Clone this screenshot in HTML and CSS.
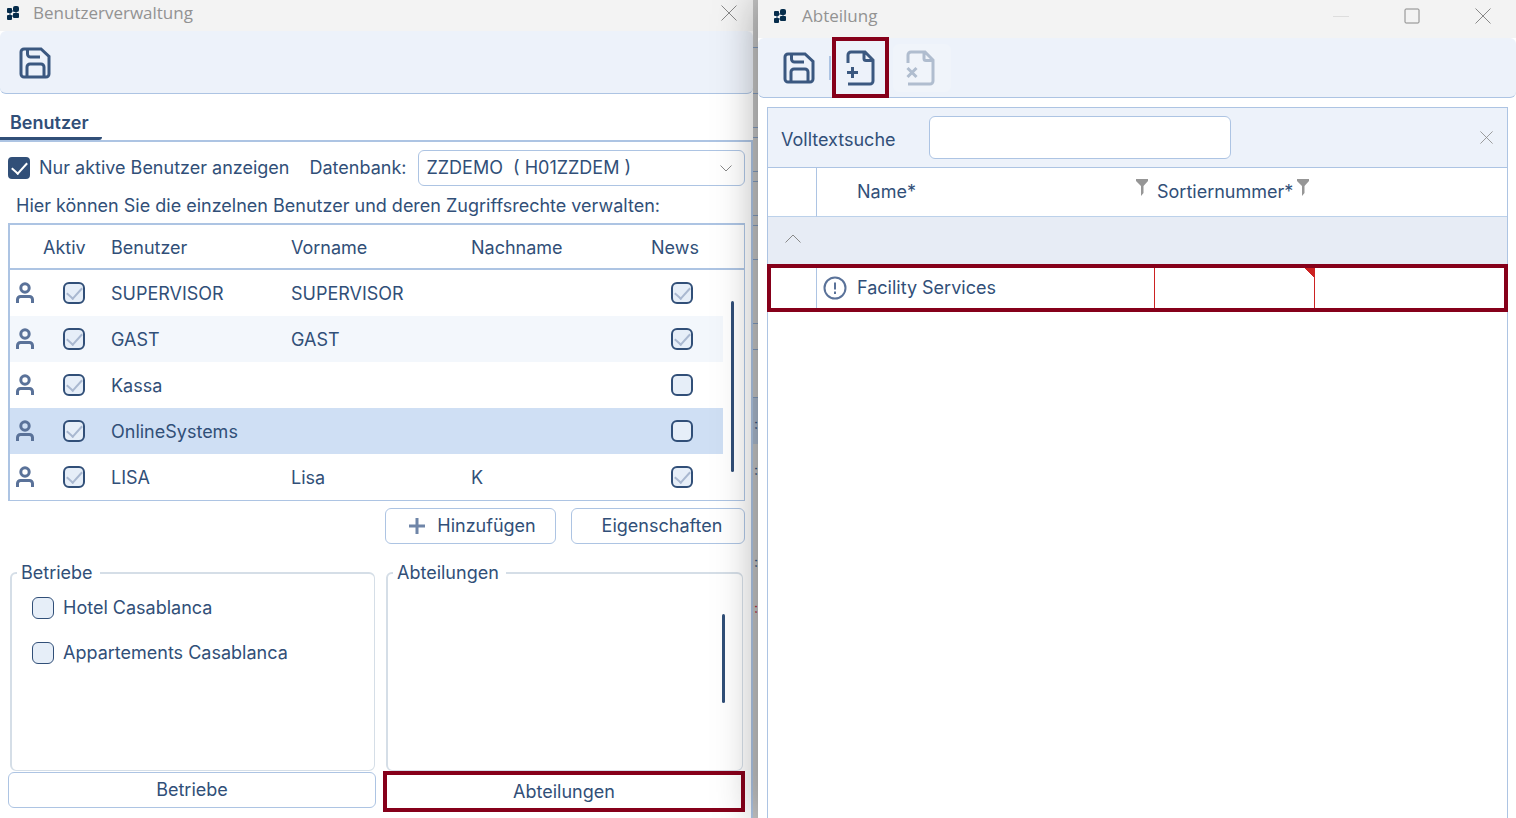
FILE: index.html
```html
<!DOCTYPE html>
<html lang="de">
<head>
    <meta charset="UTF-8">
    <meta name="viewport" content="width=device-width, initial-scale=1.0">
    <title>Benutzerverwaltung</title>
    <link rel="stylesheet" href="styles.css">
</head>
<body>
    <!-- shared icons -->
    <svg class="sprite" aria-hidden="true">
        <symbol id="logo" viewBox="0 0 14 16">
            <path d="M3 5h7v2H3zM3 10h7v2H3zM3 5h2v8H3zM9 3h2v8H9z" fill="#7d93a8"/>
            <rect x="1" y="3" width="5" height="5" rx="1" fill="#052c4b"/>
            <rect x="1" y="10" width="5" height="5" rx="1" fill="#052c4b"/>
            <rect x="7" y="1" width="6" height="6" rx="2" fill="#052c4b"/>
            <rect x="7" y="8" width="6" height="5" rx="1" fill="#052c4b"/>
        </symbol>
        <symbol id="save" viewBox="0 0 32 32">
            <path d="M5 2h17l8 7.500V27a3 3 0 0 1-3 3H5a3 3 0 0 1-3-3V5a3 3 0 0 1 3-3zM8.500 2.500V7a3 3 0 0 0 3 3H21M8 29.500V20a3 3 0 0 1 3-3h11a3 3 0 0 1 3 3v9.500"/>
        </symbol>
        <symbol id="page" viewBox="0 0 32 36">
            <path d="M5 13V5a3 3 0 0 1 3-3h14l8 8v21a3 3 0 0 1-3 3H5M21 2.500v6a2 2 0 0 0 2 2h6.500"/>
        </symbol>
        <symbol id="user" viewBox="0 0 18 22">
            <circle cx="9" cy="6" r="4.200"/>
            <path d="M1.500 21v-3.500a3 3 0 0 1 3-3h9a3 3 0 0 1 3 3V21"/>
        </symbol>
        <symbol id="close" viewBox="0 0 16 16">
            <path d="M.5.5l15 15M15.500.5l-15 15"/>
        </symbol>
        <symbol id="filter" viewBox="0 0 12 17">
            <path d="M0 0h12v2L7.500 7v7L5 17V7L0 2z"/>
        </symbol>
    </svg>

    <main class="window users">
        <header class="titlebar">
            <svg class="logo"><use href="#logo"/></svg>
            <h1>Benutzerverwaltung</h1>
            <button type="button" class="win-btn" aria-label="Schließen"><svg class="x"><use href="#close"/></svg></button>
        </header>
        <div class="toolbar">
            <button type="button" class="tool" aria-label="Speichern"><svg class="save"><use href="#save"/></svg></button>
        </div>
        <nav class="tabs">
            <a href="#benutzer" class="tab">Benutzer</a>
        </nav>

        <section class="content" id="benutzer">
            <div class="options">
                <label class="check-label"><input type="checkbox" class="solid" checked> Nur aktive Benutzer anzeigen</label>
                <label for="datenbank">Datenbank:</label>
                <div class="select">
                    <select id="datenbank">
                        <option>ZZDEMO&nbsp; ( H01ZZDEM )</option>
                    </select>
                    <svg class="chevron" viewBox="0 0 12 7"><path d="M.5.5L6 6l5.500-5.500"/></svg>
                </div>
            </div>
            <p class="hint">Hier können Sie die einzelnen Benutzer und deren Zugriffsrechte verwalten:</p>

            <div class="user-list">
                <table>
                    <colgroup>
                        <col class="c-icon"><col class="c-active"><col><col><col><col class="c-news"><col class="c-scroll">
                    </colgroup>
                    <thead>
                        <tr><th></th><th class="active">Aktiv</th><th>Benutzer</th><th>Vorname</th><th>Nachname</th><th>News</th><th></th></tr>
                    </thead>
                    <tbody>
                        <tr>
                            <td class="icon"><svg class="user"><use href="#user"/></svg></td>
                            <td class="active"><input type="checkbox" aria-label="SUPERVISOR aktiv" checked disabled></td>
                            <td>SUPERVISOR</td><td>SUPERVISOR</td><td></td>
                            <td class="news"><input type="checkbox" aria-label="SUPERVISOR News" checked disabled></td><td></td>
                        </tr>
                        <tr class="even">
                            <td class="icon"><svg class="user"><use href="#user"/></svg></td>
                            <td class="active"><input type="checkbox" aria-label="GAST aktiv" checked disabled></td>
                            <td>GAST</td><td>GAST</td><td></td>
                            <td class="news"><input type="checkbox" aria-label="GAST News" checked disabled></td><td></td>
                        </tr>
                        <tr>
                            <td class="icon"><svg class="user"><use href="#user"/></svg></td>
                            <td class="active"><input type="checkbox" aria-label="Kassa aktiv" checked disabled></td>
                            <td>Kassa</td><td></td><td></td>
                            <td class="news"><input type="checkbox" aria-label="Kassa News" disabled></td><td></td>
                        </tr>
                        <tr class="selected">
                            <td class="icon"><svg class="user"><use href="#user"/></svg></td>
                            <td class="active"><input type="checkbox" aria-label="OnlineSystems aktiv" checked disabled></td>
                            <td>OnlineSystems</td><td></td><td></td>
                            <td class="news"><input type="checkbox" aria-label="OnlineSystems News" disabled></td><td></td>
                        </tr>
                        <tr>
                            <td class="icon"><svg class="user"><use href="#user"/></svg></td>
                            <td class="active"><input type="checkbox" aria-label="LISA aktiv" checked disabled></td>
                            <td>LISA</td><td>Lisa</td><td>K</td>
                            <td class="news"><input type="checkbox" aria-label="LISA News" checked disabled></td><td></td>
                        </tr>
                    </tbody>
                </table>
                <span class="thumb"></span>
            </div>

            <div class="actions">
                <button type="button" class="btn add"><svg class="plus" viewBox="0 0 16 16"><path d="M8 0v16M0 8h16"/></svg>Hinzufügen</button>
                <button type="button" class="btn props">Eigenschaften</button>
            </div>

            <div class="groups">
                <div class="group">
                    <fieldset>
                        <legend>Betriebe</legend>
                        <label class="check-label"><input type="checkbox" class="thin"> Hotel Casablanca</label>
                        <label class="check-label"><input type="checkbox" class="thin"> Appartements Casablanca</label>
                    </fieldset>
                    <button type="button" class="btn wide">Betriebe</button>
                </div>
                <div class="group second">
                    <fieldset>
                        <legend>Abteilungen</legend>
                        <span class="thumb"></span>
                    </fieldset>
                    <button type="button" class="btn wide marked">Abteilungen</button>
                </div>
            </div>
        </section>
    </main>

    <!-- part of the window lying behind the two dialogs -->
    <div class="behind">
        <i class="h48"></i><i class="h46"></i><i class="h34"></i><i class="h10"></i><i class="h34"></i><i class="h10"></i><i class="h34"></i><i class="h10"></i><i class="h34"></i><i class="h64"></i><i class="h26"></i><i class="h48"></i>
        <b class="current">:</b><b>:</b><b></b><b>:</b><b class="red">:</b>
    </div>

    <aside class="window departments">
        <header class="titlebar">
            <svg class="logo"><use href="#logo"/></svg>
            <h1>Abteilung</h1>
            <button type="button" class="win-btn" aria-label="Minimieren" disabled><svg class="x" viewBox="0 0 16 16"><path d="M0 8.500h16"/></svg></button>
            <button type="button" class="win-btn" aria-label="Maximieren"><svg class="x" viewBox="0 0 16 16"><rect x="1" y="1" width="14" height="14" rx="1"/></svg></button>
            <button type="button" class="win-btn" aria-label="Schließen"><svg class="x"><use href="#close"/></svg></button>
        </header>
        <div class="toolbar">
            <button type="button" class="tool" aria-label="Speichern"><svg class="save"><use href="#save"/></svg></button>
            <span class="divider"></span>
            <button type="button" class="tool marked" aria-label="Neu">
                <svg class="page" viewBox="0 0 32 36"><use href="#page"/><path d="M9.500 17v11M4 22.500h11"/></svg>
            </button>
            <button type="button" class="tool off" aria-label="Löschen" disabled>
                <svg class="page" viewBox="0 0 32 36"><use href="#page"/><path d="M4.500 18l9 9M13.500 18l-9 9"/></svg>
            </button>
        </div>

        <div class="panel">
            <div class="search">
                <label for="suche">Volltextsuche</label>
                <input type="text" id="suche">
                <button type="button" class="clear" aria-label="Suche schließen"><svg class="x small"><use href="#close"/></svg></button>
            </div>
            <table>
                <colgroup>
                    <col class="c-expand"><col class="c-name"><col class="c-sort"><col>
                </colgroup>
                <thead>
                    <tr>
                        <th></th>
                        <th class="name"><span class="head">Name*<svg class="filter"><use href="#filter"/></svg></span></th>
                        <th class="sort"><span class="head">Sortiernummer*<svg class="filter"><use href="#filter"/></svg></span></th>
                        <th></th>
                    </tr>
                </thead>
                <tbody>
                    <tr class="group-row">
                        <td><button type="button" class="expand" aria-label="Zuklappen"><svg viewBox="0 0 16 9"><path d="M.5 8.500L8 1l7.500 7.500"/></svg></button></td>
                        <td colspan="3"></td>
                    </tr>
                    <tr class="marked-row">
                        <td></td>
                        <td class="name">
                            <span class="entry">
                                <svg class="info" viewBox="0 0 24 24"><circle cx="12" cy="12" r="10.500"/><path d="M12 6.500v7M12 15.500v2.500"/></svg>
                                Facility Services
                            </span>
                        </td>
                        <td class="invalid"></td>
                        <td></td>
                    </tr>
                </tbody>
            </table>
        </div>
    </aside>
</body>
</html>
```

FILE: styles.css
```css
* {
    box-sizing: border-box;
}
body {
    margin: 0;
    min-height: 100vh;
    display: flex;
    overflow: hidden;
    background: #fff;
    color: #314f78;
    font-family: Inter, "Liberation Sans", sans-serif;
    font-size: 18px;
    line-height: 24px;
}
button, input, select {
    font: inherit;
    color: inherit;
}
button {
    padding: 0;
    border: none;
    background: none;
}
svg {
    display: block;
    fill: none;
    stroke: #3b5880;
}
.sprite {
    position: absolute;
    width: 0;
    height: 0;
}
.window {
    display: flex;
    flex-direction: column;
    min-width: 0;
    background: #fff;
}
.users {
    flex: 753;
}
.departments {
    flex: 758;
    position: relative;
    box-shadow: 0 0 40px rgba(0, 0, 0, 0.35);
}

/* title bars and toolbars */
.titlebar {
    display: flex;
    align-items: center;
    height: 31px;
    padding: 0 16px 6px 6px;
    background: #f3f3f3;
}
.titlebar h1 {
    flex: 1;
    margin: 0 0 0 13px;
    color: #929292;
    font: 17px/24px "Open Sans", "Noto Sans", sans-serif;
}
.logo {
    width: 14px;
    height: 16px;
    stroke: none;
}
.win-btn {
    margin-left: 55px;
}
.win-btn:disabled {
    opacity: 0.2;
}
.x {
    width: 16px;
    height: 16px;
    stroke: #888;
}
.x.small {
    width: 13px;
    height: 13px;
}
.toolbar {
    display: flex;
    align-items: center;
    height: 63px;
    padding: 2px 0 0 19px;
    background: #edf2fa;
    border-bottom: 1px solid #adc4e3;
    border-radius: 6px;
}
.save {
    width: 32px;
    height: 32px;
    stroke-width: 3;
}
.page {
    width: 32px;
    height: 36px;
    stroke-width: 3;
}
.departments .titlebar {
    height: 38px;
    padding-left: 15px;
    padding-right: 25px;
}
.departments .titlebar h1 {
    margin-left: 15px;
}
.departments .toolbar {
    height: 60px;
    padding: 0 0 0 25px;
}
.divider {
    width: 2px;
    height: 24px;
    margin-left: 14px;
    background: #adc4e3;
}
.tool.marked {
    width: 57px;
    height: 61px;
    margin-left: 1px;
    padding-left: 7px;
    border: 4px solid #86001a;
}
.tool.off {
    width: 58px;
    height: 48px;
    margin-left: 4px;
    padding-left: 10px;
    background: #f0f4fa;
    border-radius: 6px;
}
.tool.off svg {
    opacity: 0.35;
}

/* user administration */
.tabs {
    display: flex;
    height: 48px;
    border-bottom: 2px solid #adc4e3;
}
.tab {
    width: 102px;
    padding: 17px 0 0 10px;
    border-bottom: 3px solid #314f78;
    border-radius: 0 0 3px 0;
    color: inherit;
    font-weight: 600;
    text-decoration: none;
}
.content {
    flex: 1;
    padding: 8px 6px 6px 8px;
    border-right: 2px solid #adc4e3;
}
.options {
    display: flex;
    align-items: center;
    gap: 12px;
}
.check-label {
    display: flex;
    align-items: center;
    gap: 9px;
    margin-right: 8px;
    white-space: nowrap;
}
input[type="checkbox"] {
    appearance: none;
    display: block;
    flex: none;
    position: relative;
    width: 22px;
    height: 22px;
    margin: 0;
    border: 2px solid #314f78;
    border-radius: 6px;
    background: #e6eef8;
}
input[type="checkbox"].solid {
    border-radius: 4px;
    background: #314f78;
}
input[type="checkbox"].thin {
    border-width: 1px;
}
input[type="checkbox"]:checked::before {
    content: "";
    position: absolute;
    left: 5px;
    top: 0;
    width: 7px;
    height: 13px;
    border: solid #a9b8d0;
    border-width: 0 2px 2px 0;
    transform: rotate(42deg);
}
input[type="checkbox"].solid:checked::before {
    border-color: #fff;
}
.select {
    flex: 1;
    position: relative;
}
.select select {
    appearance: none;
    display: block;
    width: 100%;
    height: 36px;
    padding: 0 7px;
    border: 1px solid #adc4e3;
    border-radius: 6px;
    background: #fff;
}
.chevron {
    position: absolute;
    right: 13px;
    top: 15px;
    width: 12px;
    height: 7px;
    stroke: #888;
}
.hint {
    margin: 8px 0 5px 8px;
    white-space: nowrap;
}
table {
    width: 100%;
    table-layout: fixed;
    border-collapse: separate;
    border-spacing: 0;
}
th, td {
    padding: 0;
    font-weight: normal;
    text-align: left;
    white-space: nowrap;
}
.user-list {
    position: relative;
    border: 2px solid #adc4e3;
    border-width: 2px 1px 1px 2px;
}
.c-icon { width: 31px; }
.c-active { width: 60px; }
.c-news { width: 82px; }
.c-scroll { width: 21px; }
.user-list th {
    height: 45px;
    padding: 3px 0 0 10px;
    border-bottom: 2px solid #adc4e3;
}
.user-list td {
    height: 46px;
    padding: 2px 0 0 10px;
}
.user-list th.active {
    padding-left: 2px;
}
.user-list td.icon {
    padding: 0 0 0 6px;
}
.user-list td.active {
    padding: 0 0 0 22px;
}
.user-list td.news {
    padding: 0 0 0 30px;
}
.user {
    width: 18px;
    height: 22px;
    stroke: #5a7299;
    stroke-width: 3;
}
.even td:not(:last-child) {
    background: #f3f7fc;
}
.selected td:not(:last-child) {
    background: #cfdff4;
}
.thumb {
    position: absolute;
    right: 10px;
    top: 76px;
    bottom: 28px;
    width: 3px;
    border-radius: 2px;
    background: #314f78;
}
.actions {
    display: flex;
    justify-content: flex-end;
    gap: 15px;
    margin-top: 7px;
}
.btn {
    display: flex;
    align-items: center;
    justify-content: center;
    height: 36px;
    border: 1px solid #adc4e3;
    border-radius: 6px;
    background: #fff;
}
.add {
    width: 171px;
    padding-left: 4px;
    gap: 12px;
}
.plus {
    width: 16px;
    height: 16px;
    stroke: #6f85a8;
    stroke-width: 3;
}
.props {
    width: 174px;
    padding-left: 8px;
}
.groups {
    display: flex;
    gap: 7px;
    margin-top: 17px;
}
.group {
    flex: 368;
}
.group.second {
    flex: 362;
}
fieldset {
    position: relative;
    height: 210px;
    min-width: 0;
    margin: 0 1px 0 2px;
    padding: 11px 20px;
    border: 2px solid #d5dee7;
    border-width: 2px 1px 1px 2px;
    border-radius: 6px;
}
.second fieldset {
    margin: 0 2px 0 3px;
}
legend {
    margin-left: -15px;
    padding: 0 7px 0 4px;
}
fieldset .check-label {
    margin-bottom: 21px;
}
fieldset .thumb {
    right: 17px;
    top: 29px;
    bottom: 67px;
}
.wide {
    width: 100%;
    margin-top: 1px;
}
.wide.marked {
    height: 41px;
    margin-top: 0;
    border: 4px solid #86001a;
    border-radius: 0;
}

/* strip between the dialogs */
.behind {
    width: 5px;
    overflow: hidden;
    background: #c4c4c4;
    font-size: 14px;
}
.behind i {
    display: block;
    border-bottom: 1px solid #8099bb;
}
.behind b {
    display: flex;
    justify-content: flex-end;
    height: 46px;
    padding-top: 14px;
    font-weight: normal;
}
.behind .current {
    background: #a9b7ca;
}
.behind .red {
    color: #b02a3c;
}
.h10 { height: 10px; }
.h26 { height: 26px; }
.h34 { height: 34px; }
.h46 { height: 46px; }
.h48 { height: 48px; }
.h64 { height: 64px; }

/* departments */
.panel {
    flex: 1;
    margin: 9px 8px 0 9px;
    border: 1px solid #adc4e3;
    border-bottom: none;
}
.search {
    display: flex;
    align-items: center;
    height: 60px;
    padding: 0 14px 0 13px;
    background: #edf2fa;
    border-bottom: 1px solid #adc4e3;
}
.search label {
    width: 148px;
    padding-top: 4px;
}
.search input {
    width: 302px;
    height: 43px;
    padding: 0 8px;
    border: 1px solid #adc4e3;
    border-radius: 6px;
    background: #fff;
}
.clear {
    margin-left: auto;
}
.c-expand { width: 49px; }
.c-name { width: 338px; }
.c-sort { width: 160px; }
.panel th {
    height: 49px;
    border-bottom: 1px solid #bcd1ea;
}
.panel th:first-child, .marked-row td:first-child {
    border-right: 1px solid #adc4e3;
}
.panel th.name {
    padding: 0 7px 0 40px;
}
.panel th.sort {
    padding-left: 2px;
}
.head {
    display: flex;
    align-items: center;
    justify-content: space-between;
}
.sort .head {
    justify-content: flex-start;
    gap: 4px;
}
.filter {
    flex: none;
    width: 12px;
    height: 17px;
    margin-bottom: 10px;
    fill: #969696;
    stroke: none;
}
.group-row td {
    height: 48px;
    padding-bottom: 6px;
    background: #e7ecf5;
}
.group-row td:last-child {
    border-bottom: 1px solid #adc4e3;
}
.expand {
    display: block;
    margin-left: 17px;
}
.expand svg {
    width: 16px;
    height: 9px;
    stroke: #888;
}
.marked-row {
    outline: 4px solid #86001a;
    outline-offset: -3px;
}
.marked-row td {
    height: 46px;
}
.marked-row td.name {
    padding-left: 6px;
    border-right: 1px solid #cc2222;
}
.marked-row td.invalid {
    border-right: 1px solid #cc2222;
    background: linear-gradient(45deg, transparent 50%, #cc2222 50%) top right / 12px 12px no-repeat;
}
.entry {
    display: flex;
    align-items: center;
    gap: 10px;
}
.info {
    width: 24px;
    height: 24px;
    stroke: #5a7299;
    stroke-width: 2;
}
```
